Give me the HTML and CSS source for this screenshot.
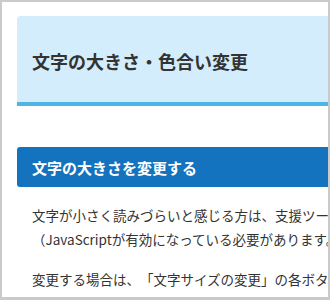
FILE: index.html
```html
<!DOCTYPE html>
<html lang="ja">
<head>
<meta charset="UTF-8"/>
<meta name="viewport" content="width=device-width,initial-scale=1.0"/>
<title>文字の大きさ・色合い変更</title>
<link rel="stylesheet" href="styles.css">
</head>
<body>

<div class="frame">
  <main class="page">
    <!-- page title -->
    <header class="page-head">
      <h1>文字の大きさ・色合い変更</h1>
    </header>

    <!-- section -->
    <section class="block">
      <h2 class="block-title">文字の大きさを変更する</h2>
      <p>文字が小さく読みづらいと感じる方は、支援ツールで文字の大きさを変更することができます。<br>（JavaScriptが有効になっている必要があります。）</p>
      <p>変更する場合は、「文字サイズの変更」の各ボタンを押してください。</p>
    </section>
  </main>
</div>

</body>
</html>
```

FILE: styles.css
```css
*{margin:0;padding:0;box-sizing:border-box}
html,body{height:100%}
body{background:#fff;color:#333;font-family:"Noto Sans CJK JP","Noto Sans",sans-serif;text-spacing-trim:space-all}

/* ---------- window frame ---------- */
.frame{
  height:300px;overflow:hidden;
  border:2px solid #cacaca;border-bottom-width:3px
}
.page{width:720px;padding:14px 0 0 15px}

/* ---------- page title ---------- */
.page-head{
  height:90px;padding:32px 15px 0;
  background:#d4edfc;border-bottom:4px solid #4db4e6;
  border-radius:4px 0 0 0
}
.page-head h1{font-size:18px;line-height:26px;font-weight:700;color:#333}

/* ---------- section ---------- */
.block{margin-top:41px}
.block-title{
  height:40px;padding:0 15px;margin-bottom:16px;
  display:flex;align-items:center;
  background:#1473be;color:#fff;
  font-size:15px;font-weight:700;border-radius:3px 0 0 3px
}
.block p{padding-left:15px;font-size:13.5px;line-height:24px;margin-bottom:16px;white-space:nowrap}
```
